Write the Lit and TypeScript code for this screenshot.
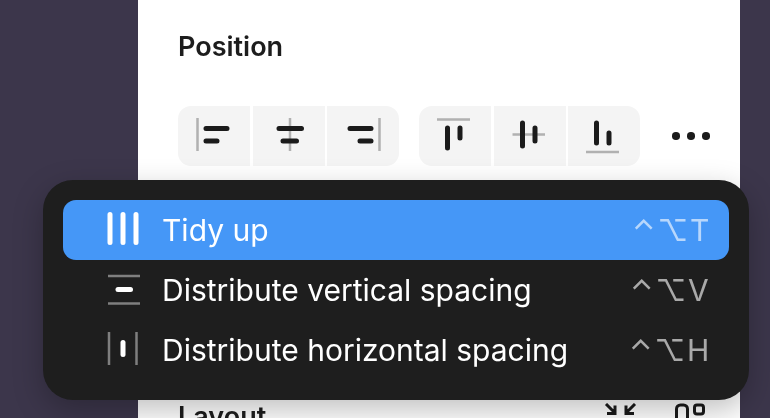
import { LitElement, html, svg, css } from 'lit';
import { customElement } from 'lit/decorators.js';

const alignIcons = [
  [
    svg`<path class="guide" d="M19.5 12V45" />
        <path class="bar" d="M28 22.5H49M28 35H39" />`,
    svg`<path class="guide" d="M37 12V45" />
        <path class="bar" d="M26 22.5H48.5M30 35H43.5" />`,
    svg`<path class="guide" d="M52.5 12V45" />
        <path class="bar" d="M23 22.5H44M33 35H44" />`,
  ],
  [
    svg`<path class="guide" d="M18 13.5H51" />
        <path class="bar" d="M28.5 22V42M41 22V32" />`,
    svg`<path class="guide" d="M18.5 28.5H51" />
        <path class="bar" d="M28.5 17V40M41 22V35" />`,
    svg`<path class="guide" d="M18 46H51" />
        <path class="bar" d="M28.5 17V37M41 27V37" />`,
  ],
];

const menuItems = [
  {
    label: 'Tidy up',
    shortcut: '⌃⌥T',
    active: true,
    icon: svg`<path class="strong" d="M3 14.5V42.5M16 14.5V42.5M29 14.5V42.5" />`,
  },
  {
    label: 'Distribute vertical spacing',
    shortcut: '⌃⌥V',
    active: false,
    icon: svg`<path class="dim" d="M1 16H33M1 43.5H33" />
              <path class="strong" d="M11 29.5H23.5" />`,
  },
  {
    label: 'Distribute horizontal spacing',
    shortcut: '⌃⌥H',
    active: false,
    icon: svg`<path class="dim" d="M2 12V45M29.5 12V45" />
              <path class="strong" d="M16 22.5V34.5" />`,
  },
];

@customElement('app-root')
export class AppRoot extends LitElement {
  static styles = css`
    :host {
      display: block;
      position: relative;
      width: 770px;
      height: 418px;
      overflow: hidden;
      background: #3c364b;
      font-family: Inter, 'Liberation Sans', sans-serif;
    }

    .panel {
      box-sizing: border-box;
      width: 602px;
      height: 418px;
      margin-left: 138px;
      padding: 30px 0 0 40px;
      background: #fff;
      overflow: hidden;
    }

    /* own layer, so the text gets greyscale antialiasing like the reference */
    .title,
    .layout-title,
    .label,
    .shortcut {
      will-change: transform;
    }

    .title {
      margin: 0;
      height: 34px;
      line-height: 34px;
      font-size: 27px;
      font-weight: 600;
      color: #1d1d1d;
    }

    .tools {
      display: flex;
      align-items: center;
      gap: 20px;
      margin-top: 42px;
    }

    .group {
      display: flex;
      gap: 2.5px;
      border-radius: 13px;
      overflow: hidden;
    }

    .tool {
      display: block;
      width: 72px;
      height: 60px;
      background: #f4f4f4;
    }

    .tool .guide {
      fill: none;
      stroke: #b1b1b1;
      stroke-width: 2.5;
    }

    .tool .bar {
      fill: none;
      stroke: #1b1b1b;
      stroke-width: 5;
      stroke-linecap: round;
    }

    .more {
      display: flex;
      gap: 7.5px;
      margin-left: 12px;
    }

    .more span {
      width: 7.5px;
      height: 7.5px;
      border-radius: 50%;
      background: #1b1b1b;
    }

    .layout-row {
      display: flex;
      align-items: flex-start;
      justify-content: space-between;
      width: 527px;
      margin-top: 236px;
    }

    .layout-title {
      font-size: 27px;
      line-height: 30px;
      font-weight: 600;
      color: #1d1d1d;
    }

    .layout-icons {
      display: block;
      width: 102px;
      height: 16px;
      margin-top: 1px;
    }

    .layout-icons path,
    .layout-icons rect {
      fill: none;
      stroke: #1b1b1b;
      stroke-width: 3;
    }

    .menu {
      position: absolute;
      left: 43px;
      top: 180px;
      box-sizing: border-box;
      width: 706px;
      height: 220px;
      padding: 20px;
      border-radius: 30px;
      background: #1e1e1e;
      box-shadow: 0 10px 30px rgba(0, 0, 0, 0.25);
    }

    .item {
      display: flex;
      align-items: center;
      height: 60px;
      padding: 0 20px 0 44px;
      border-radius: 13px;
      color: #fff;
      font-size: 30px;
      white-space: nowrap;
    }

    .item.active {
      background: #4597f7;
    }

    .icon {
      flex: none;
      width: 34px;
      height: 60px;
      margin-right: 21px;
    }

    .icon .strong {
      fill: none;
      stroke: #fff;
      stroke-width: 5;
      stroke-linecap: round;
    }

    .icon .dim {
      fill: none;
      stroke: #7f7f7f;
      stroke-width: 2.5;
    }

    .label {
      flex: 1;
    }

    .shortcut {
      font-family: Inter, 'DejaVu Sans', sans-serif;
      letter-spacing: 2px;
      margin-right: -2px;
      color: rgba(255, 255, 255, 0.62);
    }
  `;

  private _renderGroup(icons: unknown[]) {
    return html`
      <div class="group">
        ${icons.map(
          (icon) => html`<svg class="tool" viewBox="0 0 72 60">${icon}</svg>`
        )}
      </div>
    `;
  }

  render() {
    return html`
      <div class="panel">
        <h2 class="title">Position</h2>
        <div class="tools">
          ${alignIcons.map((icons) => this._renderGroup(icons))}
          <div class="more"><span></span><span></span><span></span></div>
        </div>
        <div class="layout-row">
          <span class="layout-title">Layout</span>
          <svg class="layout-icons" viewBox="0 0 102 16">
            <path d="M3 1L11 9M12 2.5V10.5H4M32 1L24 9M23 2.5V10.5H31" />
            <path d="M73.5 16V6A4 4 0 0 1 77.5 2H80.5A4 4 0 0 1 84.5 6V16" />
            <rect x="91.5" y="2" width="9" height="9" rx="2.5" />
          </svg>
        </div>
      </div>
      <div class="menu">
        ${menuItems.map(
          (item) => html`
            <div class="item ${item.active ? 'active' : ''}">
              <svg class="icon" viewBox="0 0 34 60">${item.icon}</svg>
              <span class="label">${item.label}</span>
              <span class="shortcut">${item.shortcut}</span>
            </div>
          `
        )}
      </div>
    `;
  }
}

declare global {
  interface HTMLElementTagNameMap {
    'app-root': AppRoot;
  }
}
